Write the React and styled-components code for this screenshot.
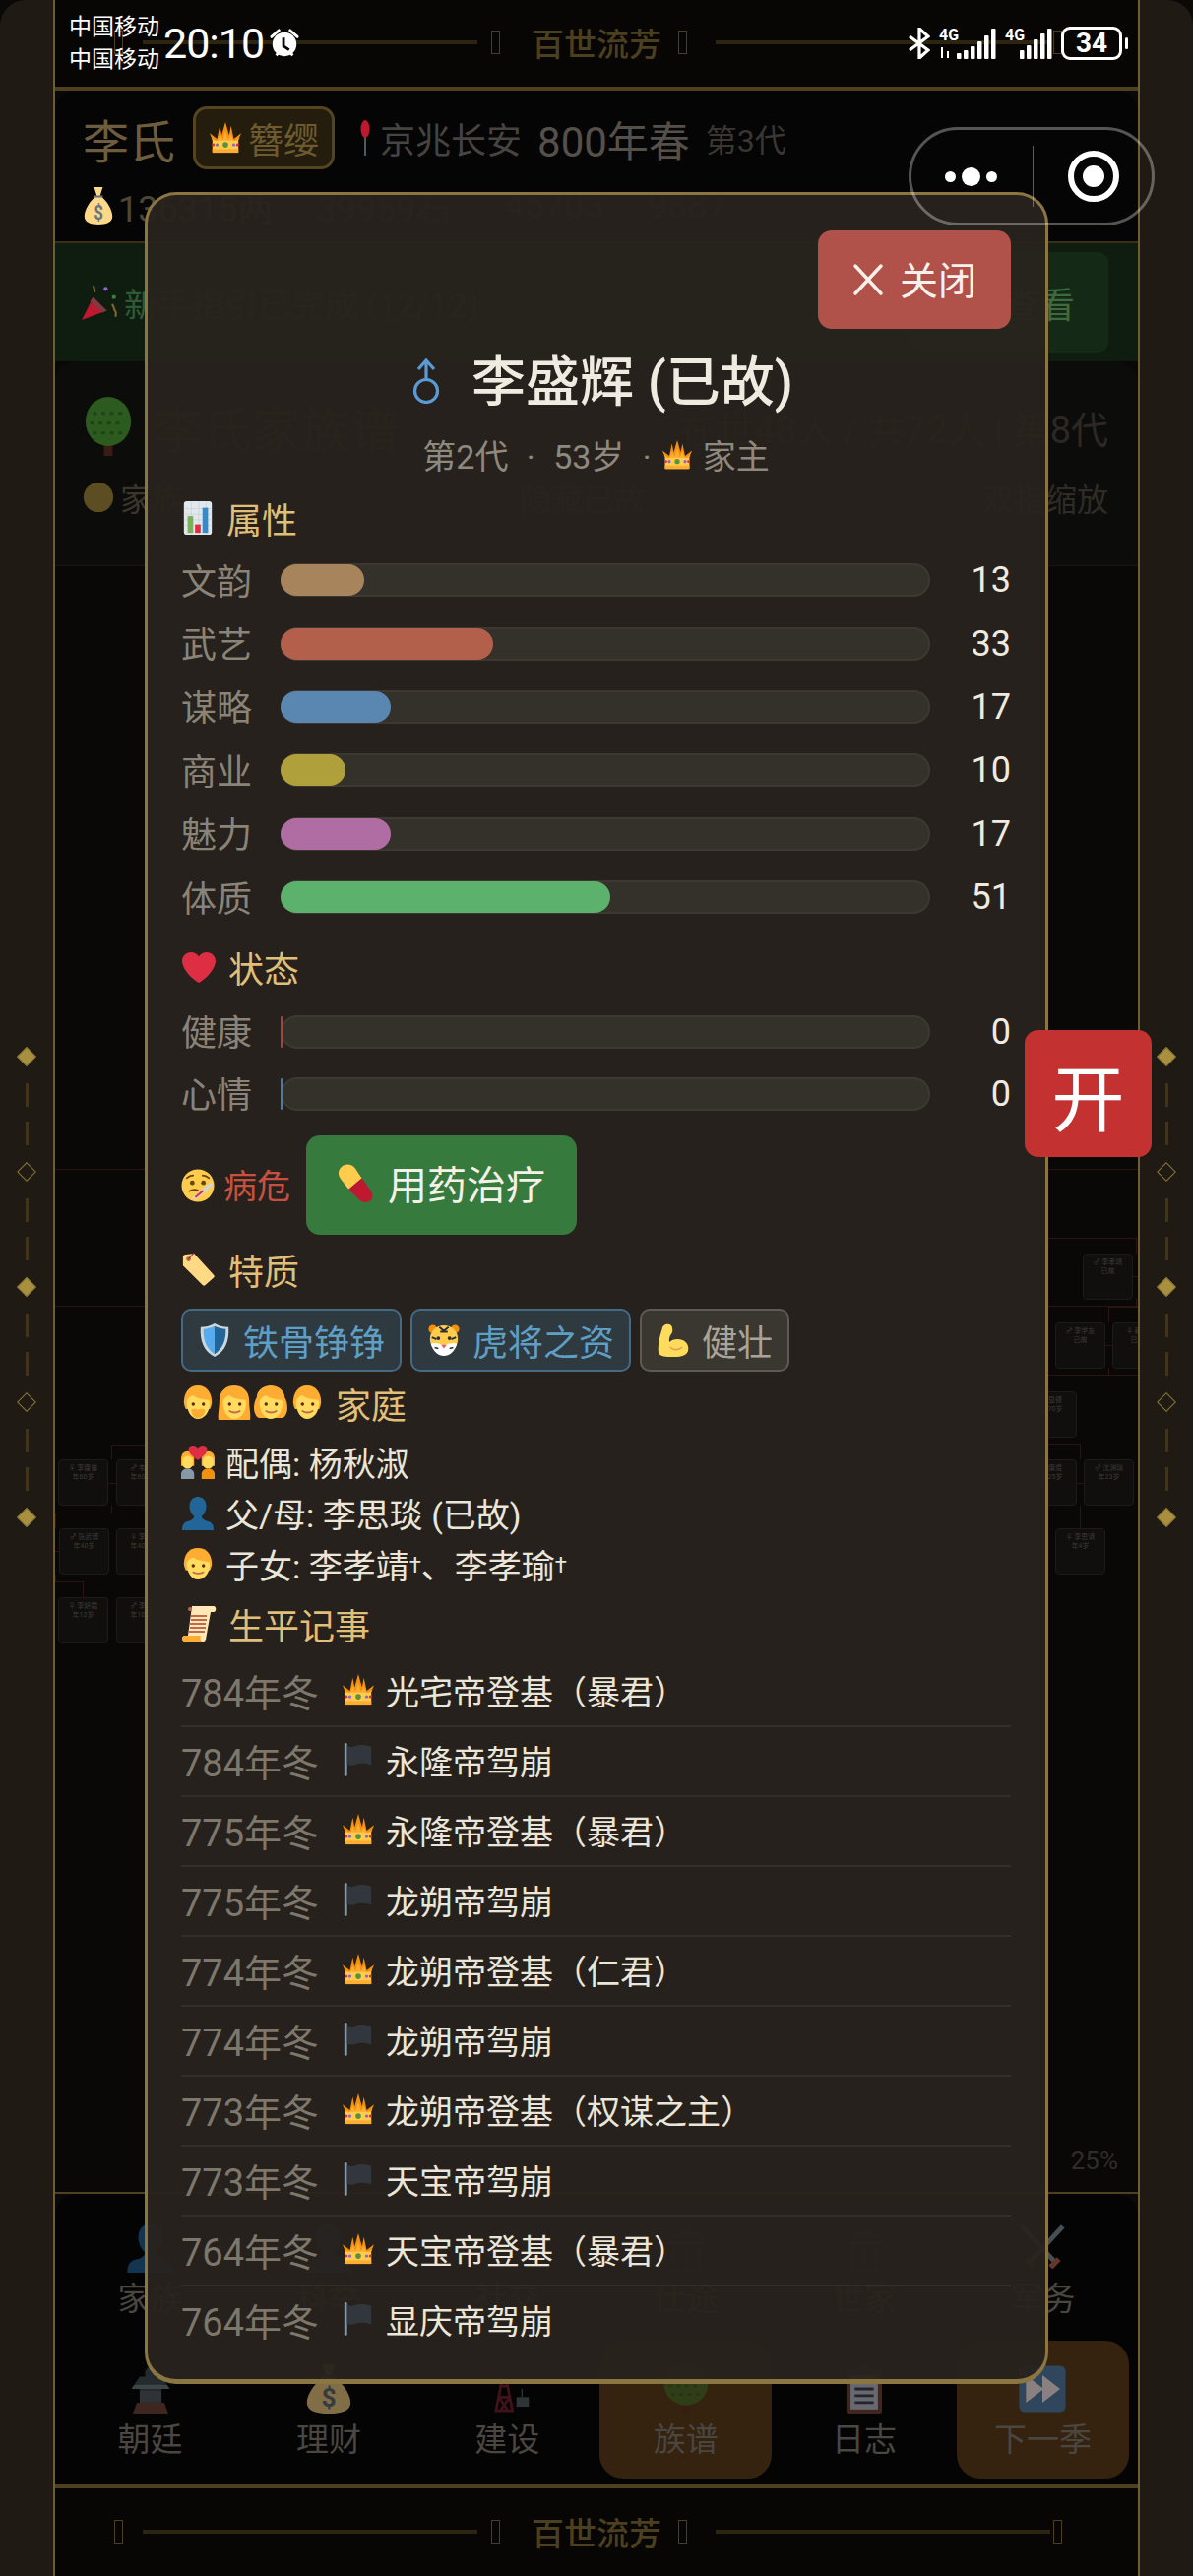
import React from "react";
import styled, { createGlobalStyle } from "styled-components";

const GlobalStyle = createGlobalStyle`
  html, body {
    margin: 0;
    padding: 0;
    background: #0a0907;
  }
  body {
    font-family: Roboto, "Noto Sans CJK SC", sans-serif;
  }
  * {
    box-sizing: border-box;
  }
`;

/* ---------- page frame ---------- */

const Page = styled.div`
  position: relative;
  width: 1212px;
  height: 2616px;
  overflow: hidden;
  display: flex;
  background: #0a0907;
`;

const Rail = styled.div`
  width: 54px;
  flex: none;
  display: flex;
  flex-direction: column;
  align-items: center;
  padding-top: 1064px;
  background: #1f1b14;
  border-radius: ${(p) => (p.$right ? "0 26px 0 0" : "26px 0 0 0")};
`;

const Diamond = styled.div`
  width: 14px;
  height: 14px;
  margin: 2px 0;
  flex: none;
  transform: rotate(45deg);
  background: ${(p) => (p.$filled ? "#a8903f" : "transparent")};
  border: 1px solid #8a7536;
`;

const Dash = styled.div`
  width: 3px;
  height: 24px;
  flex: none;
  margin-top: ${(p) => (p.$first ? 18 : 15)}px;
  margin-bottom: ${(p) => (p.$first ? 0 : 18)}px;
  background: #40351c;
`;

const Center = styled.div`
  flex: 1;
  min-width: 0;
  display: flex;
  flex-direction: column;
  border-left: 2px solid #6f5d32;
  border-right: 2px solid #6f5d32;
`;

const TitleBar = styled.div`
  height: ${(p) => p.$h}px;
  flex: none;
  display: flex;
  align-items: center;
  padding-left: 60px;
  padding-bottom: ${(p) => p.$pb || 0}px;
  background: #070605;
  color: #4c3f1e;
  font-size: 33px;
  font-weight: 500;
`;

const TitleLine = styled.div`
  width: 340px;
  height: 4px;
  flex: none;
  background: #2e250e;
`;

const Tofu = styled.span`
  width: 9px;
  height: 24px;
  flex: none;
  margin-left: ${(p) => p.$ml || 0}px;
  margin-right: ${(p) => p.$mr || 0}px;
  border: 1px solid #4c3f1e;
`;

const BandText = styled.span`
  width: 133px;
  flex: none;
  margin: 0 16px 0 32px;
  white-space: nowrap;
`;

const Rule = styled.div`
  height: ${(p) => p.$h || 4}px;
  flex: none;
  background: #4f4120;
`;

/* ---------- top panel behind the dialog ---------- */

const InfoPanel = styled.div`
  height: 155px;
  flex: none;
  padding: 9px 28px 0;
  background: #050505;
  border-radius: 22px 22px 0 0;
  border-bottom: 2px solid #3a3018;
`;

const InfoRow = styled.div`
  display: flex;
  align-items: center;
  height: ${(p) => p.$h}px;
  gap: ${(p) => p.$gap || 0}px;
`;

const ClanName = styled.span`
  font-size: 47px;
  color: #6e5d3d;
  margin-right: 18px;
`;

const RankBadge = styled.span`
  display: flex;
  align-items: center;
  gap: 6px;
  height: 64px;
  padding: 0 13px;
  font-size: 36px;
  color: #6d5a2e;
  background: #241d0e;
  border: 3px solid #54451f;
  border-radius: 14px;
  margin-right: 22px;
`;

const DimText = styled.span`
  font-size: ${(p) => p.$size}px;
  color: ${(p) => p.$color};
  margin-left: ${(p) => p.$ml || 0}px;
  white-space: nowrap;
`;

const Banner = styled.div`
  height: 120px;
  flex: none;
  display: flex;
  align-items: center;
  justify-content: space-between;
  padding: 0 30px 0 26px;
  background: #0f1c10;
  font-size: 34px;
  color: #2f5a36;
`;

const BannerLeft = styled.div`
  display: flex;
  align-items: center;
  gap: 6px;
`;

const BannerButton = styled.div`
  width: 200px;
  height: 102px;
  display: flex;
  align-items: center;
  justify-content: flex-end;
  padding-right: 34px;
  background: #142a17;
  border-radius: 10px;
  font-size: 36px;
  color: #3f6a3f;
`;

const TreeHeader = styled.div`
  height: 208px;
  flex: none;
  padding: 36px 30px 0 28px;
  background: #0c0c0a;
  border-radius: 22px 22px 0 0;
  border-bottom: 1px solid #1a1712;
`;

const TreeHeaderRow = styled.div`
  display: flex;
  align-items: center;
  justify-content: space-between;
  height: ${(p) => p.$h}px;
`;

const TreeCanvas = styled.div`
  position: relative;
  flex: 1;
  overflow: hidden;
  background: #090807;
`;

const TreeLine = styled.div`
  position: absolute;
  left: ${(p) => p.$x}px;
  top: ${(p) => p.$y}px;
  width: ${(p) => p.$w}px;
  height: ${(p) => p.$h}px;
  background: #2a1512;
`;

const TreeNode = styled.div`
  position: absolute;
  left: ${(p) => p.$x}px;
  top: ${(p) => p.$y}px;
  width: 51px;
  height: 47px;
  padding-top: 4px;
  text-align: center;
  background: #100f0e;
  border: 1px solid #1c1b18;
  border-radius: 4px;
  font-size: 7px;
  line-height: 9px;
  color: #3d3a35;
`;

const ZoomLabel = styled.span`
  position: absolute;
  right: 20px;
  bottom: 17px;
  font-size: 26px;
  color: #302d28;
`;

const NavPanel = styled.div`
  height: 295px;
  flex: none;
  display: grid;
  grid-template-columns: repeat(6, 181.4px);
  grid-template-rows: 149px 140px;
  justify-content: center;
  background: #040404;
  border-radius: 22px 22px 0 0;
`;

const NavItem = styled.div`
  display: flex;
  flex-direction: column;
  align-items: center;
  gap: 4px;
  justify-content: ${(p) => (p.$lower ? "flex-end" : "flex-start")};
  padding: ${(p) => (p.$lower ? "0 0 16px" : "30px 0 0")};
  margin: 0 3px;
  background: ${(p) => (p.$active ? "#35220f" : "transparent")};
  border-radius: 24px;
  font-size: 33px;
  line-height: 46px;
  color: #4a4640;
`;

const NavGlyph = styled.span`
  display: flex;
  opacity: 0.5;
`;

/* ---------- overlays ---------- */

const StatusBar = styled.div`
  position: absolute;
  left: 70px;
  right: 72px;
  top: 0;
  height: 88px;
  display: flex;
  align-items: center;
  justify-content: space-between;
  color: #fff;
`;

const StatusGroup = styled.div`
  display: flex;
  align-items: center;
  gap: ${(p) => p.$gap || 0}px;
`;

const Carriers = styled.div`
  font-size: 23px;
  line-height: 33px;
  width: 96px;
`;

const Clock = styled.div`
  font-size: 43px;
  line-height: 50px;
  letter-spacing: -1px;
`;

const Battery = styled.div`
  position: relative;
  width: 62px;
  height: 34px;
  display: flex;
  align-items: center;
  justify-content: center;
  border: 3px solid #fff;
  border-radius: 9px;
  font-size: 28px;
  font-weight: 700;
  line-height: 1;
  &::after {
    content: "";
    position: absolute;
    right: -9px;
    top: 8px;
    width: 3px;
    height: 12px;
    border-radius: 2px;
    background: #fff;
  }
`;

const Capsule = styled.div`
  position: absolute;
  left: 923px;
  top: 129px;
  width: 250px;
  height: 100px;
  display: flex;
  align-items: center;
  padding: 0 33px 0 34px;
  border: 3px solid rgba(255, 255, 255, 0.32);
  border-radius: 50px;
  z-index: 5;
`;

const CapsuleDots = styled.div`
  width: 53px;
  display: flex;
  align-items: center;
  justify-content: space-between;
`;

const CapsuleDot = styled.span`
  width: ${(p) => p.$size}px;
  height: ${(p) => p.$size}px;
  border-radius: 50%;
  background: #fff;
`;

const CapsuleDivider = styled.span`
  width: 1px;
  height: 62px;
  margin: 0 35px 0 36px;
  background: rgba(255, 255, 255, 0.35);
`;

const CapsuleTarget = styled.span`
  width: 52px;
  height: 52px;
  display: flex;
  align-items: center;
  justify-content: center;
  border: 6px solid #fff;
  border-radius: 50%;
  &::before {
    content: "";
    width: 22px;
    height: 22px;
    border-radius: 50%;
    background: #fff;
  }
`;

const OpenButton = styled.div`
  position: absolute;
  left: 1041px;
  top: 1046px;
  width: 129px;
  height: 129px;
  display: flex;
  align-items: center;
  justify-content: center;
  background: #c43131;
  border-radius: 14px;
  color: #fff;
  font-size: 74px;
  z-index: 4;
`;

/* ---------- dialog ---------- */

const Modal = styled.div`
  position: absolute;
  left: 147px;
  top: 195px;
  width: 918px;
  height: 2226px;
  padding: 36px 35px 0 34px;
  background: rgba(40, 35, 29, 0.95);
  border: 3px solid #8b7642;
  border-bottom-width: 5px;
  border-radius: 32px;
  color: #f0ebe0;
  z-index: 3;
`;

const CloseRow = styled.div`
  display: flex;
  justify-content: flex-end;
`;

const CloseButton = styled.div`
  width: 196px;
  height: 100px;
  display: flex;
  align-items: center;
  justify-content: center;
  gap: 16px;
  padding-bottom: 4px;
  background: #b0524a;
  border-radius: 14px;
  font-size: 39px;
  color: #f7f1ea;
`;

const NameRow = styled.div`
  height: 60px;
  margin-top: 23px;
  padding: 0 0 8px 12px;
  display: flex;
  align-items: center;
  justify-content: center;
  gap: 30px;
  font-size: 55px;
  font-weight: 500;
  color: #f0ebe0;
`;

const SubRow = styled.div`
  height: 40px;
  margin-top: 27px;
  padding-bottom: 5px;
  display: flex;
  align-items: center;
  justify-content: center;
  gap: 10px;
  font-size: 34px;
  word-spacing: 10px;
  color: #8f897d;
`;

const SectionTitle = styled.div`
  height: 44px;
  margin-top: ${(p) => p.$mt}px;
  padding-bottom: 3px;
  display: flex;
  align-items: center;
  gap: ${(p) => p.$gap || 12}px;
  font-size: 36px;
  color: #e0bf78;
`;

const StatList = styled.div`
  margin-top: ${(p) => p.$mt}px;
`;

const StatRow = styled.div`
  height: ${(p) => p.$h}px;
  display: grid;
  grid-template-columns: 101px 660px 1fr;
  align-items: center;
`;

const StatLabel = styled.span`
  padding-bottom: 3px;
  font-size: 36px;
  color: #8a8478;
`;

const StatTrack = styled.div`
  position: relative;
  height: 34px;
  background: #34302a;
  border: 2px solid #3d3932;
  border-radius: 17px;
`;

const StatFill = styled.div`
  position: absolute;
  left: -2px;
  top: -1px;
  bottom: -1px;
  background: ${(p) => p.$color};
  border-radius: 16px;
`;

const StatValue = styled.span`
  text-align: right;
  font-size: 36px;
  color: #f0ebe0;
`;

const DangerRow = styled.div`
  height: 101px;
  margin-top: 11px;
  display: flex;
  align-items: center;
`;

const DangerText = styled.span`
  margin: 0 16px 0 9px;
  padding-bottom: 2px;
  font-size: 34px;
  color: #c9503f;
`;

const TreatButton = styled.div`
  width: 275px;
  height: 101px;
  display: flex;
  align-items: center;
  gap: 12px;
  padding: 0 0 5px 31px;
  background: #367a3e;
  border-radius: 14px;
  font-size: 40px;
  color: #f4f1e8;
  white-space: nowrap;
`;

const ChipRow = styled.div`
  margin-top: 17px;
  display: flex;
  gap: 9px;
`;

const Chip = styled.div`
  height: 64px;
  display: flex;
  align-items: center;
  gap: 12px;
  padding: 0 15px;
  background: ${(p) => (p.$plain ? "#3a3630" : "#2e3a40")};
  border: 2px solid ${(p) => (p.$plain ? "#5f5b54" : "#456a85")};
  border-radius: 10px;
  font-size: 36px;
  color: ${(p) => (p.$plain ? "#a9a49b" : "#5f9fc4")};
`;

const FaceRow = styled.span`
  display: flex;
  gap: 3px;
`;

const FamilyList = styled.div`
  margin-top: 12px;
`;

const FamilyRow = styled.div`
  height: 52px;
  padding-bottom: 3px;
  display: flex;
  align-items: center;
  gap: 11px;
  font-size: 34px;
  color: #ebe6da;
`;

const Dagger = styled.sup`
  font-size: 22px;
  line-height: 0;
  vertical-align: 6px;
`;

const Timeline = styled.div`
  margin-top: 11px;
`;

const TimelineRow = styled.div`
  height: 71px;
  padding-bottom: 3px;
  display: flex;
  align-items: center;
  border-bottom: 2px solid ${(p) => (p.$last ? "transparent" : "#332e27")};
`;

const TimelineDate = styled.span`
  width: 163px;
  flex: none;
  font-size: 38px;
  color: #7d776c;
`;

const TimelineText = styled.span`
  margin-left: 11px;
  font-size: 34px;
  color: #ebe6da;
`;

/* ---------- emoji drawn as svg, there is no colour emoji font ---------- */

const Emoji = ({ size = 34, w, children }) => (
  <svg width={w || size} height={size} viewBox="0 0 36 36" preserveAspectRatio="none" style={{ flex: "none" }}>
    {children}
  </svg>
);

const Crown = ({ size }) => (
  <Emoji size={size}>
    <path fill="#F4900C" d="M1 13l5 12h24l5-12-8 6-3-14-2 10-4-14-4 14-2-10-3 14z" />
    <path fill="#FFAC33" d="M3 18l3 8h24l3-8-6 4-3-8-3 6-3-10-3 10-3-6-3 8z" />
    <rect x="4" y="21" width="28" height="13" rx="1" fill="#FFCC4D" />
    <rect x="4" y="30" width="28" height="4" fill="#FFAC33" />
    <circle cx="18" cy="25.5" r="3" fill="#5C913B" />
    <circle cx="9" cy="25.5" r="1.8" fill="#9266CC" />
    <circle cx="27" cy="25.5" r="1.8" fill="#9266CC" />
    <circle cx="5" cy="25.5" r="1.6" fill="#DD2E44" />
    <circle cx="31" cy="25.5" r="1.6" fill="#DD2E44" />
  </Emoji>
);

const Chart = ({ size }) => (
  <Emoji size={size}>
    <rect x="3" y="0" width="30" height="36" rx="3" fill="#E1E8ED" />
    <path stroke="#CCD6DD" strokeWidth="1" d="M3 8h30M3 14h30M3 20h30M3 26h30M11 0v36M19 0v36M27 0v36" />
    <rect x="7" y="16" width="6" height="18" fill="#77B255" />
    <rect x="15" y="25" width="6" height="9" fill="#DD2E44" />
    <rect x="23" y="7" width="6" height="27" fill="#3B88C3" />
  </Emoji>
);

const Heart = ({ size }) => (
  <Emoji size={size}>
    <path fill="#DD2E44" d="M35 12c0-5-4-9-9-9-3.500 0-6.400 1.700-8 4.500C16.400 4.700 13.500 3 10 3c-5 0-9 4-9 9 0 1 .2 2 .5 3C4 24 14 32 18 34c4-2 14-10 16.500-19 .3-1 .5-2 .5-3z" />
  </Emoji>
);

const SickFace = ({ size }) => (
  <Emoji size={size}>
    <circle cx="18" cy="18" r="17.500" fill="#FFCC4D" />
    <path fill="none" stroke="#664500" strokeWidth="1.800" strokeLinecap="round" d="M6 10c2-2 5-3 7-3M30 10c-2-2-5-3-7-3M9 24c3-2 6-2 9-1" />
    <circle cx="12" cy="15" r="2.500" fill="#664500" />
    <circle cx="24" cy="15" r="2.500" fill="#664500" />
    <path stroke="#CCD6DD" strokeWidth="4" strokeLinecap="round" d="M15 31l17-14" />
    <path stroke="#DD2E44" strokeWidth="2.200" strokeLinecap="round" d="M16 30l7-6" />
  </Emoji>
);

const Tag = ({ size }) => (
  <Emoji size={size}>
    <path fill="#FFD983" d="M2 5c0-2 1-3 3-3l9-1 21 23c1 1 1 2 0 3l-9 8c-1 1-2 1-3 0L2 14z" />
    <circle cx="8" cy="7" r="2.500" fill="#9E6B4B" />
    <path stroke="#BE1931" strokeWidth="1.200" d="M8 7l6-7" />
  </Emoji>
);

const Shield = ({ size }) => (
  <Emoji size={size}>
    <path fill="#CCD6DD" d="M18 0c5 3 10 4 15 4 1 14-3 26-15 32C6 30 2 18 3 4c5 0 10-1 15-4z" />
    <path fill="#55ACEE" d="M18 3c-4 2-8 3-12 3-.5 11 3 21 12 27z" />
    <path fill="#226699" d="M18 3c4 2 8 3 12 3 .5 11-3 21-12 27z" />
  </Emoji>
);

const Tiger = ({ size }) => (
  <Emoji size={size}>
    <circle cx="6" cy="6" r="4.500" fill="#F4900C" />
    <circle cx="30" cy="6" r="4.500" fill="#F4900C" />
    <ellipse cx="18" cy="17" rx="15" ry="15" fill="#FFCC4D" />
    <path stroke="#292F33" strokeWidth="2" d="M13 4l5 4 5-4M14 9h8M5 15l5 2M31 15l-5 2" fill="none" />
    <path fill="#fff" d="M4 22c4-2 10 0 14 2 4-2 10-4 14-2-2 8-8 13-14 13S6 30 4 22z" />
    <circle cx="12" cy="16" r="2" fill="#292F33" />
    <circle cx="24" cy="16" r="2" fill="#292F33" />
    <path fill="#E75A70" d="M15 23h6l-3 4z" />
    <path stroke="#292F33" strokeWidth="1.500" d="M8 26l4 1M28 26l-4 1" />
  </Emoji>
);

const Muscle = ({ size }) => (
  <Emoji size={size}>
    <path fill="#FFDC5D" d="M10 1c4-1 7 1 7 4 0 2 1 4-1 6-2 3-3 6-2 9 3-3 9-4 14-2 5 2 7 7 6 11-1 5-7 7-15 7-6 0-13 0-16-3-2-3-1-10 0-16 1-5 2-8 3-11 0-3 2-4 4-5z" />
    <path fill="none" stroke="#EF9645" strokeWidth="1.500" strokeLinecap="round" d="M15 26c3 3 9 3 12 0" />
  </Emoji>
);

const Head = ({ hair = "#FFAC33", long, pigtails, beard }) => (
  <g>
    {long && <path fill={hair} d="M2 15C2 6 9 0 18 0s16 6 16 15c0 8 2 15 1 20H1c-1-5 1-12 1-20z" />}
    {pigtails && <path fill={hair} d="M3 12C3 5 10 0 18 0s15 5 15 12c2 3 3 7 3 11 0 5-3 10-6 10H6c-3 0-6-5-6-10 0-4 1-8 3-11z" />}
    {!long && !pigtails && <path fill={hair} d="M18 0C8 0 3 8 3 17c0 3 2 7 2 7h26s2-4 2-7c0-9-5-17-15-17z" />}
    <path fill="#FFDC5D" d="M6 17c0-3 4-6 7-7 3 3 10 4 17 5 .5 1 .8 1 .8 3C30.800 27 25 34 18 34S6 26 6 17z" />
    <circle cx="13" cy="19" r="1.800" fill="#662113" />
    <circle cx="24" cy="19" r="1.800" fill="#662113" />
    {!beard && <path fill="none" stroke="#C1694F" strokeWidth="1.800" strokeLinecap="round" d="M13 26c3 2 8 2 11 0" />}
    {beard && <path fill={hair} d="M11 25c3-2 5-1 7 0 2-1 5-2 8 0-1 5-4 8-8 8s-7-3-7-8z" />}
  </g>
);

const Person = ({ size, w, ...rest }) => (
  <Emoji size={size} w={w}>
    <Head {...rest} />
  </Emoji>
);

const Couple = ({ size }) => (
  <Emoji size={size}>
    <path fill="#FFAC33" d="M0 14c0-5 3-8 7-8s7 3 7 8v8H0z" />
    <path fill="#FFAC33" d="M22 14c0-5 3-8 7-8s7 3 7 8v8H22z" />
    <ellipse cx="7" cy="18" rx="6" ry="7" fill="#FFDC5D" />
    <ellipse cx="29" cy="18" rx="6" ry="7" fill="#FFDC5D" />
    <path fill="#8899A6" d="M0 36v-5c0-4 3-6 7-6s7 2 7 6v5z" />
    <path fill="#F4900C" d="M22 36v-5c0-4 3-6 7-6s7 2 7 6v5z" />
    <path fill="#DD2E44" d="M18 16C13 12 8 9 8 4c0-3 3-4 5-4 2 0 4 1 5 3 1-2 3-3 5-3 2 0 5 1 5 4 0 5-5 8-10 12z" />
  </Emoji>
);

const Bust = ({ size }) => (
  <Emoji size={size}>
    <path fill="#226699" d="M1 36c0-6 2-9 8-10 3-1 5-3 5-5-3-2-5-7-5-11C9 4 13 0 18 0s9 4 9 10c0 4-2 9-5 11 0 2 2 4 5 5 6 1 8 4 8 10z" />
  </Emoji>
);

const Scroll = ({ size }) => (
  <Emoji size={size}>
    <path fill="#FFE8B6" d="M11 0h22c3 0 3 6 0 6h-3l-5 28c-1 2-2 2-3 2H4c-4 0-4-6 0-6h3z" />
    <path fill="#FFAC33" d="M4 30h16c-1 3 0 5 1 6H4c-4 0-4-6 0-6z" />
    <circle cx="9" cy="3" r="2" fill="#C1694F" />
    <path stroke="#C1694F" strokeWidth="1.800" d="M10 10h16M10 14h16M9 18h16M9 22h16M8 26h16" />
  </Emoji>
);

const Flag = ({ size }) => (
  <Emoji size={size}>
    <rect x="3" y="0" width="3" height="36" rx="1.500" fill="#8899A6" />
    <path fill="#31373D" d="M6 3c6 3 10-1 14-1 3 0 8 0 12 2v20c-4-2-9-2-12-2-4 0-8 4-14 1z" />
  </Emoji>
);

const Pill = ({ size }) => (
  <Emoji size={size}>
    <path fill="#FFCC4D" d="M4 4c4-4 10-3 13 1l6 9-12 10L4 15C1 11 1 7 4 4z" />
    <path fill="#BE1931" d="M23 14l8 11c3 4 2 8-1 10-4 2-8 1-11-3l-8-8z" />
  </Emoji>
);

const MoneyBag = ({ size, w }) => (
  <Emoji size={size} w={w}>
    <path fill="#FDD888" d="M13 0h10l-3 8c8 5 14 14 14 20 0 6-7 8-16 8S2 34 2 28c0-6 6-15 14-20z" />
    <path fill="#67757F" d="M13 8h10v2H13z" />
    <text x="18" y="31" textAnchor="middle" fontSize="19" fontWeight="700" fill="#67757F">$</text>
  </Emoji>
);

const Pin = ({ size, w }) => (
  <Emoji size={size} w={w}>
    <rect x="16.500" y="14" width="3" height="22" fill="#67757F" />
    <circle cx="18" cy="9" r="9" fill="#BE1931" />
  </Emoji>
);

const Party = ({ size }) => (
  <Emoji size={size}>
    <path fill="#BE1931" d="M1 35l11-22 13 13z" />
    <path fill="#7D3B42" d="M12 13l13 13-4 2-12-11z" />
    <circle cx="24" cy="5" r="2" fill="#9266CC" />
    <circle cx="32" cy="13" r="2" fill="#3E7D3E" />
    <path fill="none" stroke="#7B6A2A" strokeWidth="2" d="M30 20c3 2 1 4 3 6s0 4 1 6M12 2c2 2 0 4 2 6" />
  </Emoji>
);

const Tree = ({ size, w }) => (
  <Emoji size={size} w={w}>
    <rect x="15" y="28" width="6" height="8" fill="#3a1c12" />
    <ellipse cx="18" cy="15" rx="16" ry="15" fill="#2c5a1f" />
    <path stroke="#1f4416" strokeWidth="2" strokeDasharray="1 5" strokeLinecap="round" d="M8 10h22M6 16h24M8 22h22" />
  </Emoji>
);

const Castle = ({ size }) => (
  <Emoji size={size}>
    <path fill="#46505a" d="M14 5l4-5 4 5v4h-8zM10 9h16l4 6H6zM10 15h16v4H10z" />
    <path fill="#778888" d="M6 15h24l2 3H4z" />
    <rect x="10" y="19" width="16" height="9" fill="#5b636b" />
    <path fill="#7a4b3a" d="M8 28h20l3 8H5z" />
  </Emoji>
);

const Tower = ({ size }) => (
  <Emoji size={size}>
    <path fill="none" stroke="#7c2030" strokeWidth="2" d="M10 34l5-26h2l5 26zM12 24h8M13 16h6M12 24l7 10M20 24l-7 10" />
    <rect x="25" y="24" width="9" height="7" fill="#5a646c" />
    <path stroke="#5a646c" strokeWidth="1" d="M29 24v-6" />
  </Emoji>
);

const Clipboard = ({ size }) => (
  <Emoji size={size}>
    <rect x="5" y="4" width="26" height="32" rx="2" fill="#7a4b3a" />
    <rect x="8" y="8" width="20" height="25" fill="#ccccdd" />
    <rect x="13" y="0" width="10" height="8" rx="2" fill="#555555" />
    <path stroke="#444455" strokeWidth="2" d="M11 13h14M11 18h14M11 23h14M11 28h14" />
  </Emoji>
);

const FastForward = ({ size }) => (
  <Emoji size={size}>
    <rect x="1" y="1" width="34" height="34" rx="4" fill="#2a6aa8" />
    <path fill="#ddddee" d="M6 8l13 10-13 10zM18 8l13 10-13 10z" />
  </Emoji>
);

const Swords = ({ size }) => (
  <Emoji size={size}>
    <path stroke="#8899A6" strokeWidth="3.500" d="M33 2L9 28M3 2l24 26" />
    <path stroke="#C1694F" strokeWidth="4" d="M6 26l6 6M30 26l-6 6" />
  </Emoji>
);

const Temple = ({ size }) => (
  <Emoji size={size}>
    <path fill="#3a3732" d="M18 1l16 10H2zM4 13h28v3H4zM6 32h24v3H6zM7 18h4v13H7zM16 18h4v13h-4zM25 18h4v13h-4z" />
  </Emoji>
);

const Mars = () => (
  <svg width="32" height="46" viewBox="0 0 32 46" fill="none" stroke="#5b9bd5" strokeWidth="3.200" style={{ flex: "none", marginTop: 8 }}>
    <circle cx="16" cy="33" r="11.500" />
    <path d="M16 22V2M8 11l8-9 8 9" />
  </svg>
);

const CloseX = () => (
  <svg width="32" height="34" viewBox="0 0 32 34" stroke="#f7f1ea" strokeWidth="3.500" strokeLinecap="round" style={{ flex: "none", marginTop: 4 }}>
    <path d="M3 3l26 28M29 3L3 31" />
  </svg>
);

const Bluetooth = () => (
  <svg width="22" height="32" viewBox="0 0 22 32" fill="none" stroke="#fff" strokeWidth="3.200">
    <path d="M1 9l19 14-9 8V1l9 8L1 23" />
  </svg>
);

const Alarm = () => (
  <svg width="32" height="34" viewBox="0 0 34 34" style={{ marginLeft: 5 }}>
    <path d="M3 10L11 3M31 10l-8-7" stroke="#fff" strokeWidth="3" strokeLinecap="round" />
    <circle cx="17" cy="18" r="13" fill="#fff" />
    <path d="M16 11v9l6 4" stroke="#000" strokeWidth="3" fill="none" />
    <path d="M8 30l3-3M26 30l-3-3" stroke="#fff" strokeWidth="3" />
  </svg>
);

const Signal = ({ width, bars, dual }) => (
  <svg width={width} height="34" viewBox={`0 0 ${width} 34`}>
    <text x="0" y="14" fontSize="16" fontWeight="700" fill="#fff" fontFamily="Roboto, sans-serif">4G</text>
    {dual && <path d="M3 21v11M9 25v7" stroke="#fff" strokeWidth="2" />}
    {bars.map((b, i) => (
      <rect key={i} x={width - (bars.length - i) * 7 + 2} y={33 - b} width="4.500" height={b} rx="1" fill="#fff" />
    ))}
  </svg>
);

/* ---------- data ---------- */

const stats = [
  { label: "文韵", value: 13, color: "#a8845c" },
  { label: "武艺", value: 33, color: "#b25f4b" },
  { label: "谋略", value: 17, color: "#5a86b2" },
  { label: "商业", value: 10, color: "#b0a03c" },
  { label: "魅力", value: 17, color: "#b06da3" },
  { label: "体质", value: 51, color: "#5cb16d" },
];

const timeline = [
  ["784年冬", "crown", "光宅帝登基（暴君）"],
  ["784年冬", "flag", "永隆帝驾崩"],
  ["775年冬", "crown", "永隆帝登基（暴君）"],
  ["775年冬", "flag", "龙朔帝驾崩"],
  ["774年冬", "crown", "龙朔帝登基（仁君）"],
  ["774年冬", "flag", "龙朔帝驾崩"],
  ["773年冬", "crown", "龙朔帝登基（权谋之主）"],
  ["773年冬", "flag", "天宝帝驾崩"],
  ["764年冬", "crown", "天宝帝登基（暴君）"],
  ["764年冬", "flag", "显庆帝驾崩"],
];

const navTop = [
  { label: "家族", Icon: Bust },
  { label: "科举", Icon: Bust },
  { label: "社交", Icon: Temple },
  { label: "仕途", Icon: Temple },
  { label: "世家", Icon: Temple },
  { label: "军务", Icon: Swords },
];

const navBottom = [
  { label: "朝廷", Icon: Castle },
  { label: "理财", Icon: MoneyBag },
  { label: "建设", Icon: Tower },
  { label: "族谱", Icon: Tree, active: true },
  { label: "日志", Icon: Clipboard },
  { label: "下一季", Icon: FastForward, active: true },
];

// offsets are relative to the tree canvas, which starts at x 56, y 576
const treeNodes = [
  [3, 907, "♀ 李康普", "年60岁"],
  [62, 907, "♂ 韦明", "年60岁"],
  [4, 977, "♂ 张武博", "年40岁"],
  [62, 977, "♀ 李云", "年40岁"],
  [3, 1047, "♀ 李妍霜", "年12岁"],
  [62, 1047, "♂ 李和", "年10岁"],
  [1044, 698, "♂ 李孝靖", "已故"],
  [1016, 768, "♂ 李学友", "已故"],
  [1074, 768, "♀ 韩云", "已故"],
  [987, 838, "李显德", "年70岁"],
  [987, 907, "李康煜", "年25岁"],
  [1045, 907, "♂ 沈渊琰", "年23岁"],
  [1016, 977, "♀ 李思请", "年4岁"],
];

const treeLines = [
  [0, 612, 1100, 1],
  [0, 751, 1100, 1],
  [57, 892, 60, 1],
  [57, 892, 1, 15],
  [54, 931, 8, 1],
  [57, 954, 1, 7],
  [0, 961, 100, 1],
  [0, 961, 1, 16],
  [0, 1000, 4, 1],
  [0, 1024, 1, 7],
  [0, 1031, 28, 1],
  [28, 1031, 1, 16],
  [1000, 682, 98, 1],
  [1098, 682, 1, 16],
  [1094, 721, 6, 1],
  [1098, 744, 1, 8],
  [1070, 752, 30, 1],
  [1070, 752, 1, 16],
  [1066, 791, 8, 1],
  [1000, 821, 100, 1],
  [1070, 814, 1, 7],
  [1000, 891, 41, 1],
  [1041, 891, 1, 16],
  [1037, 931, 8, 1],
  [1041, 954, 1, 23],
];

const TitleBand = ({ h, pb }) => (
  <TitleBar $h={h} $pb={pb}>
    <Tofu $mr={20} />
    <TitleLine />
    <Tofu $ml={14} />
    <BandText>百世流芳</BandText>
    <Tofu $mr={29} />
    <TitleLine />
    <Tofu $ml={3} />
  </TitleBar>
);

const RailMarks = ({ right }) => (
  <Rail $right={right}>
    {[0, 1, 2, 3, 4].map((i) => (
      <React.Fragment key={i}>
        <Diamond $filled={i % 2 === 0} />
        {i < 4 && (
          <>
            <Dash $first />
            <Dash />
          </>
        )}
      </React.Fragment>
    ))}
  </Rail>
);

const Stat = ({ h, label, value, color, fillWidth }) => (
  <StatRow $h={h}>
    <StatLabel>{label}</StatLabel>
    <StatTrack>
      <StatFill $color={color} style={{ width: fillWidth }} />
    </StatTrack>
    <StatValue>{value}</StatValue>
  </StatRow>
);

const App = () => (
  <Page>
    <GlobalStyle />
    <RailMarks />
    <Center>
      <TitleBand h={88} pb={2} />
      <Rule $h={4} />
      <InfoPanel>
        <InfoRow $h={78}>
          <ClanName>李氏</ClanName>
          <RankBadge>
            <Crown size={34} />
            簪缨
          </RankBadge>
          <Pin size={36} w={18} />
          <DimText $size={36} $color="#474340" $ml={6}>京兆长安</DimText>
          <DimText $size={42} $color="#55514a" $ml={16}>800年春</DimText>
          <DimText $size={32} $color="#3a3732" $ml={16}>第3代</DimText>
        </InfoRow>
        <InfoRow $h={60} $gap={4}>
          <MoneyBag size={38} w={32} />
          <DimText $size={36} $color="#4d4536">136315两</DimText>
          <DimText $size={36} $color="#3a362c" $ml={40}>39959石</DimText>
          <DimText $size={36} $color="#3a362c" $ml={50}>45703</DimText>
          <DimText $size={36} $color="#3a362c" $ml={40}>9887</DimText>
        </InfoRow>
      </InfoPanel>
      <Banner>
        <BannerLeft>
          <Party size={38} />
          新手指引已完成 (12/12)
        </BannerLeft>
        <BannerButton>查看</BannerButton>
      </Banner>
      <TreeHeader>
        <TreeHeaderRow $h={60}>
          <BannerLeft>
            <Tree size={60} w={52} />
            <DimText $size={50} $color="#2c2924" $ml={14}>李氏家族谱</DimText>
          </BannerLeft>
          <DimText $size={38} $color="#2c2924">在世48人 / 共72人 | 第8代</DimText>
        </TreeHeaderRow>
        <TreeHeaderRow $h={84}>
          <BannerLeft>
            <Emoji size={32}>
              <circle cx="18" cy="18" r="17" fill="#5c4e22" />
            </Emoji>
            <DimText $size={32} $color="#3b362a">家族</DimText>
          </BannerLeft>
          <DimText $size={32} $color="#2e2c26">隐藏已故</DimText>
          <DimText $size={32} $color="#2e2c26">双指缩放</DimText>
        </TreeHeaderRow>
      </TreeHeader>
      <TreeCanvas>
        {treeLines.map(([x, y, w, h], i) => (
          <TreeLine key={i} $x={x} $y={y} $w={w} $h={h} />
        ))}
        {treeNodes.map(([x, y, name, age]) => (
          <TreeNode key={name} $x={x} $y={y}>
            {name}
            <br />
            {age}
          </TreeNode>
        ))}
        <ZoomLabel>25%</ZoomLabel>
      </TreeCanvas>
      <Rule $h={2} />
      <NavPanel>
        {navTop.map(({ label, Icon }) => (
          <NavItem key={label}>
            <NavGlyph>
              <Icon size={50} />
            </NavGlyph>
            {label}
          </NavItem>
        ))}
        {navBottom.map(({ label, Icon, active }) => (
          <NavItem key={label} $lower $active={active}>
            <NavGlyph>
              <Icon size={50} />
            </NavGlyph>
            {label}
          </NavItem>
        ))}
      </NavPanel>
      <Rule $h={4} />
      <TitleBand h={89} pb={2} />
    </Center>
    <RailMarks right />

    <StatusBar>
      <StatusGroup>
        <Carriers>
          中国移动
          <br />
          中国移动
        </Carriers>
        <Clock>20:10</Clock>
        <Alarm />
      </StatusGroup>
      <StatusGroup $gap={9}>
        <Bluetooth />
        <Signal width={58} bars={[6, 9, 13, 18, 24, 31]} dual />
        <Signal width={48} bars={[9, 14, 20, 26, 31]} />
        <Battery>34</Battery>
      </StatusGroup>
    </StatusBar>

    <Capsule>
      <CapsuleDots>
        <CapsuleDot $size={11} />
        <CapsuleDot $size={19} />
        <CapsuleDot $size={11} />
      </CapsuleDots>
      <CapsuleDivider />
      <CapsuleTarget />
    </Capsule>

    <Modal>
      <CloseRow>
        <CloseButton>
          <CloseX />
          关闭
        </CloseButton>
      </CloseRow>
      <NameRow>
        <Mars />
        李盛辉 (已故)
      </NameRow>
      <SubRow>
        <span>第2代 · 53岁 ·</span>
        <Crown size={32} />
        家主
      </SubRow>

      <SectionTitle $mt={21}>
        <Chart size={34} />
        属性
      </SectionTitle>
      <StatList $mt={8}>
        {stats.map((s) => (
          <Stat key={s.label} h={64.4} label={s.label} value={s.value} color={s.color} fillWidth={`${s.value}%`} />
        ))}
      </StatList>

      <SectionTitle $mt={18}>
        <Heart size={36} />
        状态
      </SectionTitle>
      <StatList $mt={11}>
        <Stat h={63} label="健康" value={0} color="#c0392b" fillWidth="2px" />
        <Stat h={63} label="心情" value={0} color="#3f7fb5" fillWidth="2px" />
      </StatList>

      <DangerRow>
        <SickFace size={34} />
        <DangerText>病危</DangerText>
        <TreatButton>
          <Pill size={40} />
          用药治疗
        </TreatButton>
      </DangerRow>

      <SectionTitle $mt={14} $gap={14}>
        <Tag size={34} />
        特质
      </SectionTitle>
      <ChipRow>
        <Chip>
          <Shield size={34} />
          铁骨铮铮
        </Chip>
        <Chip>
          <Tiger size={34} />
          虎将之资
        </Chip>
        <Chip $plain>
          <Muscle size={34} />
          健壮
        </Chip>
      </ChipRow>

      <SectionTitle $mt={11} $gap={12}>
        <FaceRow>
          <Person size={36} w={34} beard />
          <Person size={36} w={34} long />
          <Person size={36} w={34} pigtails />
          <Person size={36} w={34} />
        </FaceRow>
        家庭
      </SectionTitle>
      <FamilyList>
        <FamilyRow>
          <Couple size={34} />
          配偶: 杨秋淑
        </FamilyRow>
        <FamilyRow>
          <Bust size={34} />
          父/母: 李思琰 (已故)
        </FamilyRow>
        <FamilyRow>
          <Person size={34} />
          <span>
            子女: 李孝靖<Dagger>†</Dagger>、李孝瑜<Dagger>†</Dagger>
          </span>
        </FamilyRow>
      </FamilyList>

      <SectionTitle $mt={12}>
        <Scroll size={36} />
        生平记事
      </SectionTitle>
      <Timeline>
        {timeline.map(([date, icon, text], i) => (
          <TimelineRow key={i} $last={i === timeline.length - 1}>
            <TimelineDate>{date}</TimelineDate>
            {icon === "crown" ? <Crown size={34} /> : <Flag size={34} />}
            <TimelineText>{text}</TimelineText>
          </TimelineRow>
        ))}
      </Timeline>
    </Modal>

    <OpenButton>开</OpenButton>
  </Page>
);

export default App;
